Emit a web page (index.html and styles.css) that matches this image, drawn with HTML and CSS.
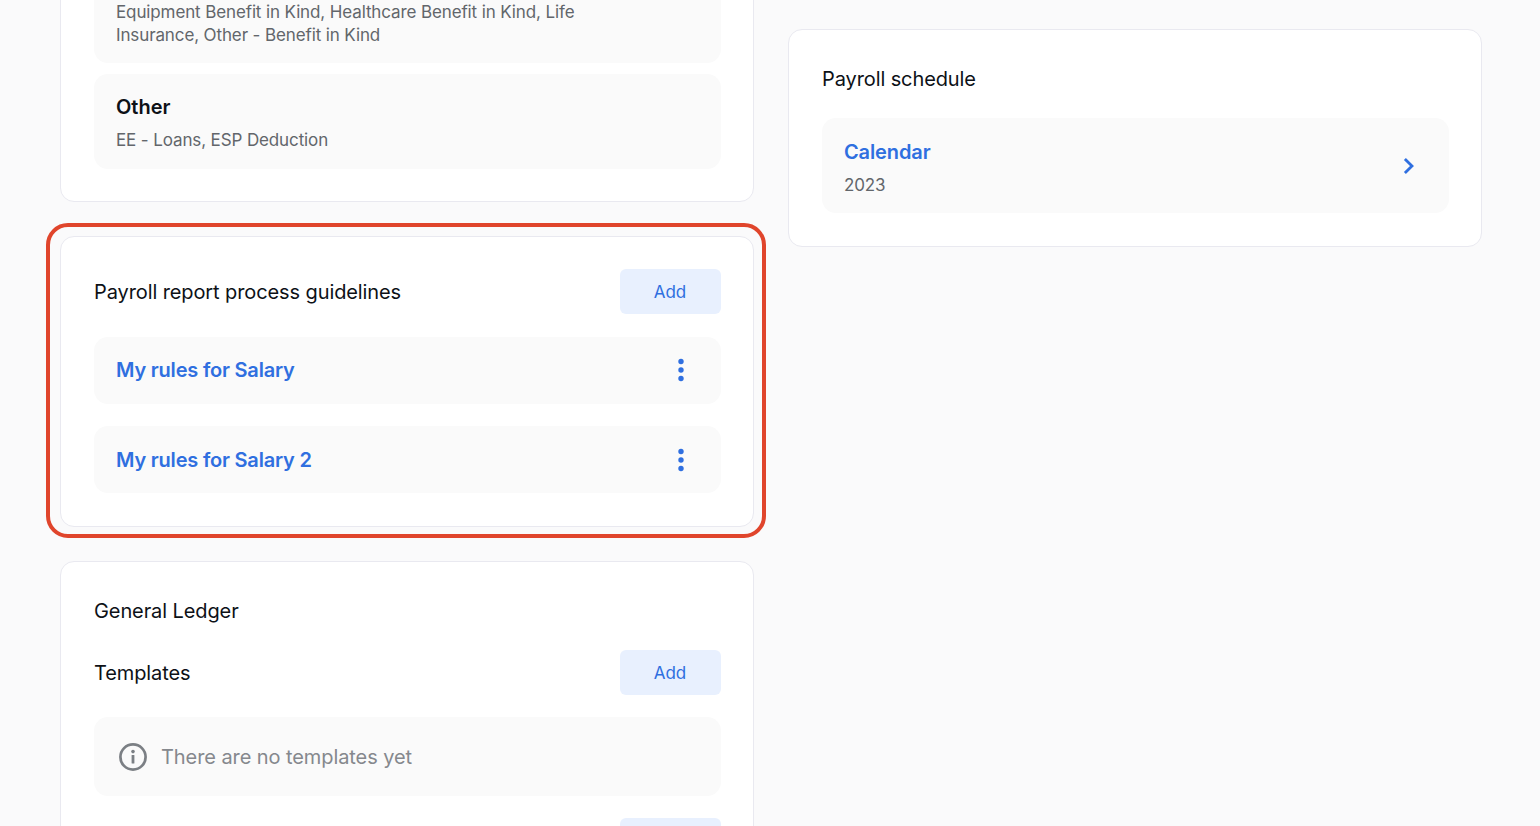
FILE: index.html
```html
<!DOCTYPE html>
<html lang="en">
<head>
<meta charset="utf-8">
<title>Payroll settings</title>
<link rel="stylesheet" href="styles.css">
</head>
<body>
<main class="page">
  <div class="col col-left">
    <section class="card">
      <div class="stack tight">
        <div class="box box-plain"><p class="sub sub-narrow">Equipment Benefit in Kind, Healthcare Benefit in Kind, Life Insurance, Other - Benefit in Kind</p></div>
        <div class="box box-compact">
          <h3 class="box-title">Other</h3>
          <p class="sub">EE - Loans, ESP Deduction</p>
        </div>
      </div>
    </section>

    <section class="card card-tall highlighted">
      <div class="stack">
        <div class="row row-lead">
          <h2 class="title">Payroll report process guidelines</h2>
          <button class="btn">Add</button>
        </div>
        <div class="link-row link-row-first">
          <a class="link">My rules for Salary</a>
          <svg class="dots" width="6" height="24" viewBox="0 0 6 24"><circle cx="3" cy="3.5" r="2.7"/><circle cx="3" cy="12" r="2.7"/><circle cx="3" cy="20.5" r="2.7"/></svg>
        </div>
        <div class="link-row">
          <a class="link">My rules for Salary 2</a>
          <svg class="dots" width="6" height="24" viewBox="0 0 6 24"><circle cx="3" cy="3.5" r="2.7"/><circle cx="3" cy="12" r="2.7"/><circle cx="3" cy="20.5" r="2.7"/></svg>
        </div>
      </div>
    </section>

    <section class="card">
      <div class="stack">
        <h2 class="title">General Ledger</h2>
        <div class="row">
          <span class="title">Templates</span>
          <button class="btn">Add</button>
        </div>
        <div class="empty">
          <svg class="info" width="30" height="30" viewBox="0 0 30 30" fill="none"><circle cx="15" cy="15" r="12.6" stroke="#7b7f84" stroke-width="2.7"/><rect x="13.6" y="13" width="2.8" height="8.6" rx="0.6" fill="#7b7f84"/><circle cx="15" cy="9.6" r="1.8" fill="#7b7f84"/></svg>
          <span class="empty-text">There are no templates yet</span>
        </div>
        <div class="row">
          <span class="title"></span>
          <button class="btn" aria-label="Add"></button>
        </div>
      </div>
    </section>
  </div>

  <div class="col col-right">
    <section class="card card-tall">
      <div class="stack">
        <h2 class="title">Payroll schedule</h2>
        <div class="box box-link">
          <div>
            <a class="box-title link">Calendar</a>
            <p class="sub">2023</p>
          </div>
          <svg class="chev" width="12" height="18" viewBox="0 0 12 18" fill="none"><path d="M1.9 1.9L9 9l-7.1 7.1" stroke="#2f6fe0" stroke-width="2.8"/></svg>
        </div>
      </div>
    </section>
  </div>
</main>
</body>
</html>
```

FILE: styles.css
```css
* { box-sizing: border-box; }
html, body { margin: 0; height: 100%; overflow: hidden; }
body {
  background: #fafafb;
  font-family: Inter, "Liberation Sans", sans-serif;
  color: #0d1117;
}
.page {
  display: flex;
  gap: 34px;
  align-items: flex-start;
  padding-left: 60px;
  height: 826px;
  overflow: hidden;
}
.col { width: 694px; flex: none; display: flex; flex-direction: column; gap: 34px; }
.col-left { margin-top: -50px; }
.col-right { margin-top: 29px; }
.card {
  position: relative;
  background: #fff;
  border: 1px solid #e9e9f0;
  border-radius: 14px;
  padding: 32px 32px 32px 33px;
}
.card-tall { padding-bottom: 33px; }
.highlighted::after {
  content: "";
  position: absolute;
  inset: -14px -13px -12px -15px;
  border: 4px solid #e0452c;
  border-radius: 22px;
  pointer-events: none;
}
.stack { display: flex; flex-direction: column; gap: 22px; }
.stack.tight { gap: 11px; }
.row { display: flex; justify-content: space-between; align-items: center; min-height: 45px; }
.row-lead { margin-bottom: 1px; }
.title { margin: 0; font-size: 20px; line-height: 34px; font-weight: 400; letter-spacing: -0.1px; color: #0d1117; }
.btn {
  width: 101px;
  height: 45px;
  border: 0;
  border-radius: 6px;
  padding: 2px 1px 0 0;
  background: #e8f0fe;
  color: #2f6fe0;
  font: 400 17px/1 Inter, "Liberation Sans", sans-serif;
}
.box { background: #fafafa; border-radius: 14px; padding: 17px 22px 16px; }
.box-plain { padding: 18px 22px 16px; }
.box-compact { padding: 16px 22px 17px; }
.box-title { display: block; margin: 0 0 5px; font-size: 20px; line-height: 34px; font-weight: 600; color: #0d1117; }
.sub { margin: 0; font-size: 17px; line-height: 23px; letter-spacing: -0.12px; color: #62666b; }
.sub-narrow { max-width: 480px; }
.link { color: #2f6fe0; font-size: 20px; font-weight: 600; letter-spacing: -0.2px; }
.box-title.link { color: #2f6fe0; letter-spacing: -0.12px; }
.box-link { display: flex; justify-content: space-between; align-items: center; padding-right: 34px; }
.link-row {
  display: flex;
  justify-content: space-between;
  align-items: center;
  height: 67px;
  padding: 0 37px 0 22px;
  background: #fafafa;
  border-radius: 14px;
}
.link-row-first { padding-bottom: 2px; }
.dots { fill: #2f6fe0; }
.empty {
  display: flex;
  align-items: center;
  gap: 13px;
  height: 79px;
  padding: 0 24px;
  background: #fafafa;
  border-radius: 14px;
}
.empty-text { font-size: 20px; letter-spacing: -0.08px; color: #85888d; }
```
